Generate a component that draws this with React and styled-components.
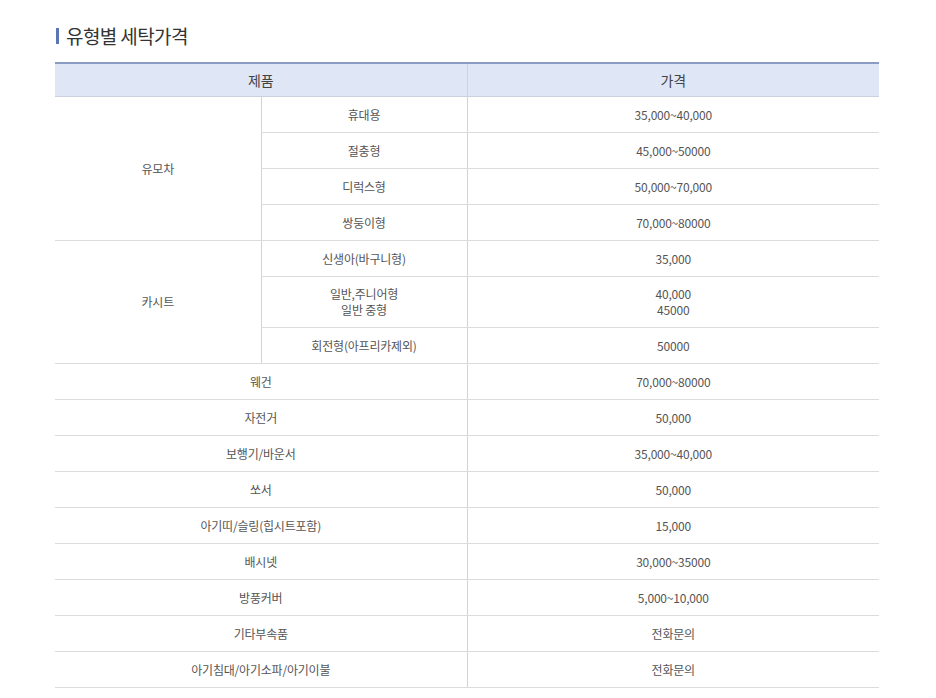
import React from "react";
import styled, { createGlobalStyle } from "styled-components";

const GlobalStyle = createGlobalStyle`
  body {
    margin: 0;
    background: #fff;
    font-family: "Noto Sans CJK KR", "Noto Sans", sans-serif;
  }
`;

const Page = styled.div`
  padding: 24px 0 0 55px;
  width: 824px;
`;

const Title = styled.h3`
  display: flex;
  align-items: center;
  gap: 7px;
  margin: 0 0 14px 1px;
  font-size: 19px;
  font-weight: 400;
  line-height: 24px;
  color: #333;
  letter-spacing: -0.6px;

  &::before {
    content: "";
    width: 3px;
    height: 16px;
    background: #5a74b4;
  }
`;

const Table = styled.table`
  width: 824px;
  border-collapse: collapse;
  table-layout: fixed;
  border-top: 2px solid #8b9cc4;
  border-bottom: 1px solid #b9c0d0;
`;

const HeadCell = styled.th`
  height: 32px;
  padding: 0;
  background: #dfe6f6;
  border-bottom: 1px solid #c9d0de;
  border-left: ${(p) => (p.first ? "none" : "1px solid #d3d3d3")};
  font-size: 14px;
  font-weight: 400;
  color: #444;
`;

const Cell = styled.td`
  height: ${(p) => (p.tall ? "50px" : "35px")};
  padding: 0;
  border-bottom: 1px solid #dcdcdc;
  border-left: ${(p) => (p.first ? "none" : "1px solid #d3d3d3")};
  text-align: center;
  vertical-align: middle;
  font-size: 12px;
  line-height: 16px;
  color: #555;
  letter-spacing: -0.2px;
`;

const groups = [
  {
    name: "유모차",
    items: [
      ["휴대용", "35,000~40,000"],
      ["절충형", "45,000~50000"],
      ["디럭스형", "50,000~70,000"],
      ["쌍둥이형", "70,000~80000"],
    ],
  },
  {
    name: "카시트",
    items: [
      ["신생아(바구니형)", "35,000"],
      [["일반,주니어형", "일반 중형"], ["40,000", "45000"]],
      ["회전형(아프리카제외)", "50000"],
    ],
  },
];

const singles = [
  ["웨건", "70,000~80000"],
  ["자전거", "50,000"],
  ["보행기/바운서", "35,000~40,000"],
  ["쏘서", "50,000"],
  ["아기띠/슬링(힙시트포함)", "15,000"],
  ["배시넷", "30,000~35000"],
  ["방풍커버", "5,000~10,000"],
  ["기타부속품", "전화문의"],
  ["아기침대/아기소파/아기이불", "전화문의"],
];

const Lines = ({ value }) =>
  Array.isArray(value)
    ? value.map((v, i) => (
        <React.Fragment key={i}>
          {i > 0 && <br />}
          {v}
        </React.Fragment>
      ))
    : value;

export default function App() {
  return (
    <>
      <GlobalStyle />
      <Page>
        <Title>유형별 세탁가격</Title>
        <Table>
          <colgroup>
            <col style={{ width: 206 }} />
            <col style={{ width: 206 }} />
            <col style={{ width: 412 }} />
          </colgroup>
          <thead>
            <tr>
              <HeadCell first colSpan={2}>
                제품
              </HeadCell>
              <HeadCell>가격</HeadCell>
            </tr>
          </thead>
          <tbody>
            {groups.map((g) =>
              g.items.map(([kind, price], i) => {
                const tall = Array.isArray(kind);
                return (
                  <tr key={g.name + i}>
                    {i === 0 && (
                      <Cell first rowSpan={g.items.length}>
                        {g.name}
                      </Cell>
                    )}
                    <Cell tall={tall}>
                      <Lines value={kind} />
                    </Cell>
                    <Cell tall={tall}>
                      <Lines value={price} />
                    </Cell>
                  </tr>
                );
              })
            )}
            {singles.map(([name, price]) => (
              <tr key={name}>
                <Cell first colSpan={2}>
                  {name}
                </Cell>
                <Cell>{price}</Cell>
              </tr>
            ))}
          </tbody>
        </Table>
      </Page>
    </>
  );
}
